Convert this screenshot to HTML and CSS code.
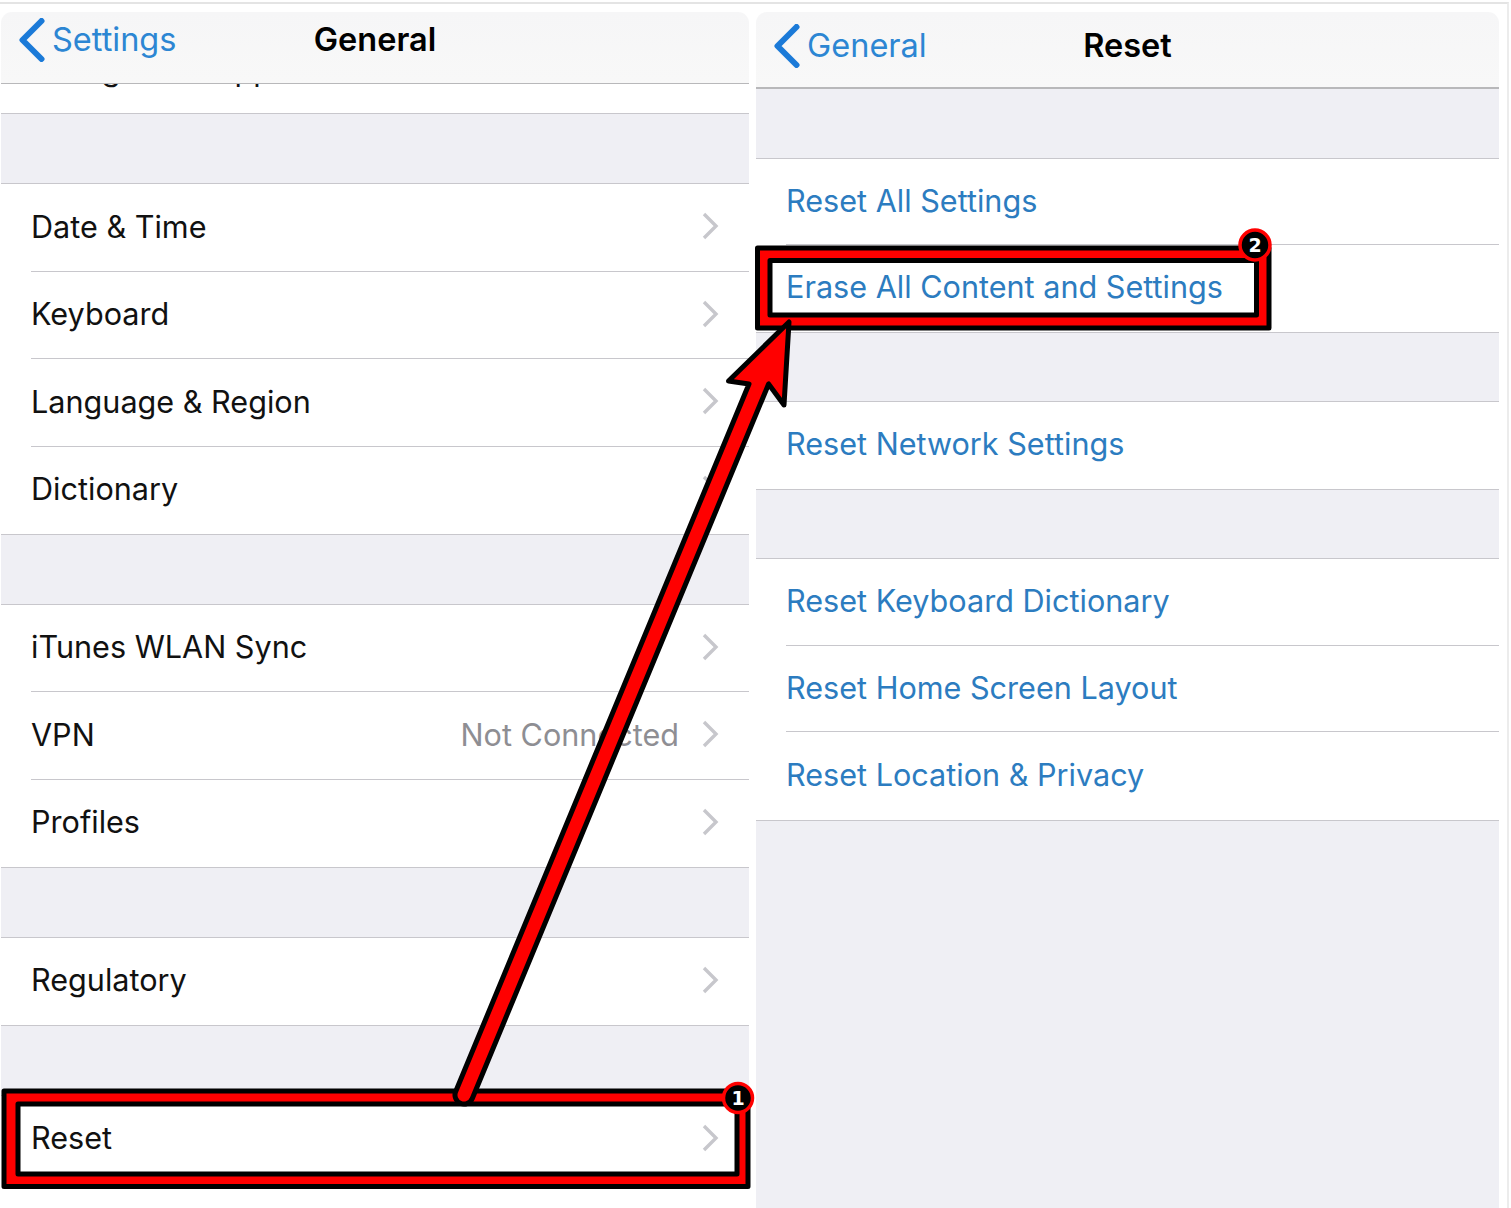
FILE: index.html
```html
<!DOCTYPE html>
<html lang="en">
<head>
    <meta charset="UTF-8">
    <title>Erase All Content and Settings</title>
    <link rel="stylesheet" href="styles.css">
</head>
<body>
    <div class="page">
        <!-- General screen -->
        <section class="panel panel-left">
            <header class="nav nav-short">
                <a class="back">
                    <svg class="back-icon" viewBox="0 0 26 44"><path d="M23 3 L4 22 L23 41"/></svg>
                    <span>Settings</span>
                </a>
                <h1>General</h1>
            </header>
            <div class="clipped-row"><span>Background App Refresh</span></div>
            <div class="gap"></div>
            <div class="row"><span>Date &amp; Time</span><svg class="chev" viewBox="0 0 18 30"><path d="M3 3 L15 15 L3 27"/></svg></div>
            <div class="row"><span>Keyboard</span><svg class="chev" viewBox="0 0 18 30"><path d="M3 3 L15 15 L3 27"/></svg></div>
            <div class="row"><span>Language &amp; Region</span><svg class="chev" viewBox="0 0 18 30"><path d="M3 3 L15 15 L3 27"/></svg></div>
            <div class="row row-last"><span>Dictionary</span><svg class="chev" viewBox="0 0 18 30"><path d="M3 3 L15 15 L3 27"/></svg></div>
            <div class="gap"></div>
            <div class="row"><span>iTunes WLAN Sync</span><svg class="chev" viewBox="0 0 18 30"><path d="M3 3 L15 15 L3 27"/></svg></div>
            <div class="row"><span>VPN</span><em>Not Connected</em><svg class="chev" viewBox="0 0 18 30"><path d="M3 3 L15 15 L3 27"/></svg></div>
            <div class="row row-last"><span>Profiles</span><svg class="chev" viewBox="0 0 18 30"><path d="M3 3 L15 15 L3 27"/></svg></div>
            <div class="gap"></div>
            <div class="row row-last"><span>Regulatory</span><svg class="chev" viewBox="0 0 18 30"><path d="M3 3 L15 15 L3 27"/></svg></div>
            <div class="gap"></div>
            <div class="row row-last"><span>Reset</span><svg class="chev" viewBox="0 0 18 30"><path d="M3 3 L15 15 L3 27"/></svg></div>
        </section>

        <!-- Reset screen -->
        <section class="panel panel-right">
            <header class="nav nav-tall">
                <a class="back">
                    <svg class="back-icon" viewBox="0 0 26 44"><path d="M23 3 L4 22 L23 41"/></svg>
                    <span>General</span>
                </a>
                <h1>Reset</h1>
            </header>
            <div class="gap gap-first"></div>
            <div class="row action"><span>Reset All Settings</span></div>
            <div class="row row-last action"><span>Erase All Content and Settings</span></div>
            <div class="gap"></div>
            <div class="row row-last action"><span>Reset Network Settings</span></div>
            <div class="gap"></div>
            <div class="row action"><span>Reset Keyboard Dictionary</span></div>
            <div class="row action"><span>Reset Home Screen Layout</span></div>
            <div class="row row-last action"><span>Reset Location &amp; Privacy</span></div>
            <div class="rest"></div>
        </section>
    </div>

    <!-- Red annotations drawn over the screenshots -->
    <svg class="marks" viewBox="0 0 1511 1208">
        <path class="mark" fill-rule="evenodd" d="M4 1091 H748 V1186.5 H4 Z M18 1104 H737 V1174 H18 Z"/>
        <path class="mark" fill-rule="evenodd" d="M757.5 248 H1269 V328 H757.5 Z M770 260.5 H1256.5 V315 H770 Z"/>
        <path class="mark" d="M789 322 L784 405 L768.6 384 L472.3 1098.5 A9 9 0 0 1 455.7 1091.5 L749 384 L728.5 381 Z"/>
        <circle class="badge" cx="738" cy="1098" r="14.5"/>
        <text class="badge-num" x="738" y="1105">1</text>
        <circle class="badge" cx="1255" cy="245" r="15"/>
        <text class="badge-num" x="1255" y="252">2</text>
    </svg>
</body>
</html>
```

FILE: styles.css
```css
:root {
    --gray: #efeff4;
    --line: #c8c7cc;
    --blue: #2c7cc0;
}

* {
    margin: 0;
    padding: 0;
    box-sizing: border-box;
}

body {
    background: white;
    color: #111;
    font-family: 'Inter', 'Liberation Sans', sans-serif;
    width: 1511px;
    height: 1208px;
    position: relative;
    overflow: hidden;
}

.page {
    display: flex;
    gap: 7px;
    width: 1509px;
    height: 1208px;
    margin-top: 2px;
    padding: 8px 0 0 1px;
    border-top: 2px solid #e4e4e4;
    border-right: 2px solid #ececec;
}

.panel {
    display: flex;
    flex-direction: column;
    height: 1196px;
}

.panel-left {
    width: 748px;
}

.panel-right {
    width: 743px;
}

/* Nav bars */
.nav {
    position: relative;
    display: flex;
    flex-shrink: 0;
    justify-content: center;
    background: linear-gradient(#f6f6f7, #f8f8f8);
    border-bottom: 1px solid #b8b8ba;
    border-radius: 11px 11px 0 0;
}

.nav-short {
    height: 72px;
    padding-top: 7px;
}

.nav-tall {
    height: 77px;
    padding-top: 13px;
    border-bottom-width: 2px;
}

.nav h1 {
    font-size: 32.5px;
    line-height: 42px;
    font-weight: 600;
    color: #000;
}

.back {
    position: absolute;
    left: 17px;
    top: 6px;
    display: flex;
    align-items: center;
    gap: 7px;
    color: #2c86d3;
    font-size: 32.5px;
    line-height: 44px;
}

.nav-tall .back {
    top: 12px;
}

.back-icon {
    width: 27px;
    height: 44px;
}

.back-icon path {
    fill: none;
    stroke: #1b7ad8;
    stroke-width: 6;
    stroke-linecap: round;
    stroke-linejoin: round;
}

/* Table rows */
.clipped-row {
    height: 29px;
    flex-shrink: 0;
    overflow: hidden;
    padding-left: 30px;
    font-size: 30.6px;
    line-height: 12px;
}

.clipped-row span {
    display: block;
    margin-top: -20px;
}

.gap {
    height: 71px;
    flex-shrink: 0;
    background: var(--gray);
    border-top: 1px solid var(--line);
    border-bottom: 1px solid var(--line);
}

.panel-right .gap {
    height: 70.5px;
}

.panel-right .gap-first {
    height: 69.5px;
    border-top: 0;
}

.row {
    position: relative;
    display: flex;
    align-items: center;
    flex-shrink: 0;
    height: 87.5px;
    padding: 0 30px;
    font-size: 30.6px;
    background: white;
}

.row::after {
    content: "";
    position: absolute;
    left: 30px;
    right: 0;
    bottom: 0;
    border-bottom: 1px solid var(--line);
}

.row-last {
    height: 87px;
}

.row-last::after {
    display: none;
}

.panel-right .row {
    height: 86.5px;
}

.panel-right .row:nth-last-child(2) {
    height: 88px;
}

.row span {
    flex: 1;
    padding-bottom: 3px;
}

.row em {
    font-style: normal;
    color: #8e8e93;
    margin-right: 22px;
    padding-bottom: 3px;
}

.chev {
    width: 18px;
    height: 30px;
    margin-bottom: 3px;
}

.chev path {
    fill: none;
    stroke: #c7c7cc;
    stroke-width: 3.4;
}

.action {
    color: var(--blue);
}

.rest {
    flex: 1;
    background: var(--gray);
    border-top: 1px solid var(--line);
}

/* Annotations */
.marks {
    position: absolute;
    top: 0;
    left: 0;
    width: 1511px;
    height: 1208px;
}

.mark {
    fill: #f00;
    stroke: #000;
    stroke-width: 5;
    stroke-linejoin: round;
}

.badge {
    fill: #000;
    stroke: #f00;
    stroke-width: 3.5;
}

.badge-num {
    fill: white;
    font-family: 'DejaVu Sans', sans-serif;
    font-size: 19px;
    font-weight: bold;
    text-anchor: middle;
}
```
